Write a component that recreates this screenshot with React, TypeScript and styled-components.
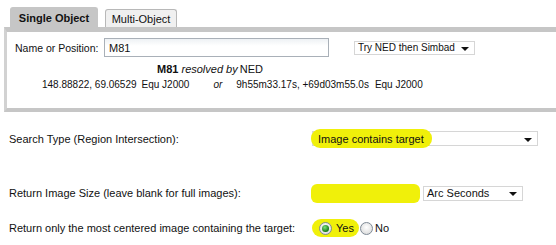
import React, { FC } from 'react';
import styled, { createGlobalStyle } from 'styled-components';

const GlobalStyle = createGlobalStyle`
  html, body {
    margin: 0;
    padding: 0;
    background: #fff;
  }
  body {
    font-family: 'Liberation Sans', Arial, sans-serif;
    font-size: 11px;
    color: #111;
    white-space: nowrap;
  }
`;

const yellow = '#f0f00a';

const Page = styled.div`
  width: 556px;
  height: 245px;
  overflow: hidden;
`;

const TabRow = styled.div`
  display: flex;
  align-items: flex-end;
  gap: 7px;
  height: 27px;
  padding-left: 10px;
`;

const Tab = styled.div<{ active?: boolean }>`
  box-sizing: border-box;
  height: ${(p) => (p.active ? '20px' : '18px')};
  width: ${(p) => (p.active ? '88px' : '72px')};
  display: flex;
  align-items: center;
  justify-content: center;
  font-size: 11px;
  font-weight: ${(p) => (p.active ? 'bold' : 'normal')};
  background: ${(p) => (p.active ? '#c6c6c6' : '#f0f0f0')};
  border: 1px solid ${(p) => (p.active ? '#c6c6c6' : '#b8b8b8')};
  border-bottom: none;
  border-radius: 3px 3px 0 0;
  padding-top: 1px;
`;

const Panel = styled.div`
  box-sizing: border-box;
  margin-left: 4px;
  height: 85px;
  border-top: 5px solid #c6c6c6;
  border-left: 3px solid #d2d2d2;
  border-bottom: 4px solid #c6c6c6;
  padding: 6px 0 0 8px;
`;

const NameRow = styled.div`
  display: flex;
  align-items: center;
  height: 19px;
`;

const FieldLabel = styled.span`
  width: 89px;
  font-size: 10.5px;
`;

const TextBox = styled.div<{ w: number }>`
  box-sizing: border-box;
  width: ${(p) => p.w}px;
  height: 19px;
  border: 1px solid #a9b0b8;
  background: linear-gradient(#eef1f4, #fff 40%);
  padding: 0 4px;
  display: flex;
  align-items: center;
  font-size: 11px;
`;

const Select = styled.div<{ w: number; h?: number; fs?: number }>`
  box-sizing: border-box;
  width: ${(p) => p.w}px;
  height: ${(p) => p.h ?? 15}px;
  border: 1px solid #d6d6d6;
  background: #fff;
  display: flex;
  align-items: center;
  justify-content: space-between;
  padding: 0 5px 0 3px;
  font-size: ${(p) => p.fs ?? 11}px;
  position: relative;
`;

const Arrow = styled.span`
  position: relative;
  z-index: 1;
  width: 0;
  height: 0;
  border-left: 4px solid transparent;
  border-right: 4px solid transparent;
  border-top: 4px solid #111;
  margin-top: 2px;
`;

const Resolved = styled.div`
  margin-top: 5px;
  padding-left: 142px;
  font-size: 11px;
  height: 15px;
  line-height: 15px;
  i {
    margin-right: 2px;
  }
`;

const Coords = styled.div`
  margin-top: 2px;
  padding-left: 27px;
  font-size: 10px;
  display: flex;
  align-items: baseline;
`;

const CoordPart = styled.span<{ gap: number }>`
  margin-left: ${(p) => p.gap}px;
`;

const OrWord = styled.i<{ gap: number }>`
  margin-left: ${(p) => p.gap}px;
`;

const Form = styled.div`
  display: grid;
  grid-template-columns: 303px 1fr;
  padding-left: 9px;
  align-items: center;
`;

const FormRow = styled.div<{ h: number }>`
  display: contents;
  & > * {
    height: ${(p) => p.h}px;
    display: flex;
    align-items: center;
  }
`;

const FormLabel = styled.span`
  font-size: 11px;
`;

const Control = styled.div`
  display: flex;
  align-items: center;
  gap: 3px;
`;

const Highlight = styled.span<{ w: number }>`
  position: absolute;
  left: -2px;
  top: -3px;
  bottom: -3px;
  width: ${(p) => p.w}px;
  background: ${yellow};
  border-radius: 9px;
`;

const HlText = styled.span`
  position: relative;
  z-index: 1;
  padding-left: 2px;
`;

const SizeBox = styled.div`
  width: 109px;
  height: 19px;
  background: ${yellow};
  border-radius: 6px;
  margin-left: -1px;
`;

const RadioGroup = styled.div`
  display: flex;
  align-items: center;
  font-size: 11px;
`;

const YesPill = styled.span`
  display: flex;
  align-items: center;
  gap: 4px;
  height: 18px;
  background: ${yellow};
  border-radius: 9px;
  padding: 0 5px 0 7px;
`;

const RadioDot = styled.span<{ on?: boolean }>`
  box-sizing: border-box;
  width: 13px;
  height: 13px;
  border-radius: 50%;
  border: 1px solid #7e8a96;
  background: radial-gradient(circle at 50% 40%, #ffffff, #d4d4d4);
  display: inline-flex;
  align-items: center;
  justify-content: center;
  &::after {
    content: '';
    display: ${(p) => (p.on ? 'block' : 'none')};
    width: 7px;
    height: 7px;
    border-radius: 50%;
    background: radial-gradient(circle at 40% 35%, #7ee07e, #137a13 70%);
  }
`;

const NoOption = styled.span`
  display: flex;
  align-items: center;
  gap: 2px;
  margin-left: 1px;
`;

const App: FC = () => {
  return (
    <Page>
      <GlobalStyle />
      <TabRow>
        <Tab active>Single Object</Tab>
        <Tab>Multi-Object</Tab>
      </TabRow>
      <Panel>
        <NameRow>
          <FieldLabel>Name or Position:</FieldLabel>
          <TextBox w={225}>M81</TextBox>
          <Select w={121} h={14} fs={10} style={{ marginLeft: 25 }}>
            Try NED then Simbad <Arrow />
          </Select>
        </NameRow>
        <Resolved>
          <b>M81</b> <i>resolved by</i>NED
        </Resolved>
        <Coords>
          <span>148.88822, 69.06529</span>
          <CoordPart gap={5}>Equ J2000</CoordPart>
          <OrWord gap={24}>or</OrWord>
          <CoordPart gap={14}>9h55m33.17s, +69d03m55.0s</CoordPart>
          <CoordPart gap={6}>Equ J2000</CoordPart>
        </Coords>
      </Panel>
      <Form>
        <FormRow h={53}>
          <FormLabel>Search Type (Region Intersection):</FormLabel>
          <Control>
            <Select w={226}>
              <Highlight w={121} />
              <HlText>Image contains target</HlText>
              <Arrow />
            </Select>
          </Control>
        </FormRow>
        <FormRow h={56}>
          <FormLabel>Return Image Size (leave blank for full images):</FormLabel>
          <Control>
            <SizeBox />
            <Select w={100}>
              Arc Seconds <Arrow />
            </Select>
          </Control>
        </FormRow>
        <FormRow h={14}>
          <FormLabel>Return only the most centered image containing the target:</FormLabel>
          <Control>
            <RadioGroup>
              <YesPill>
                <RadioDot on />
                Yes
              </YesPill>
              <NoOption>
                <RadioDot />
                No
              </NoOption>
            </RadioGroup>
          </Control>
        </FormRow>
      </Form>
    </Page>
  );
};

export default App;
